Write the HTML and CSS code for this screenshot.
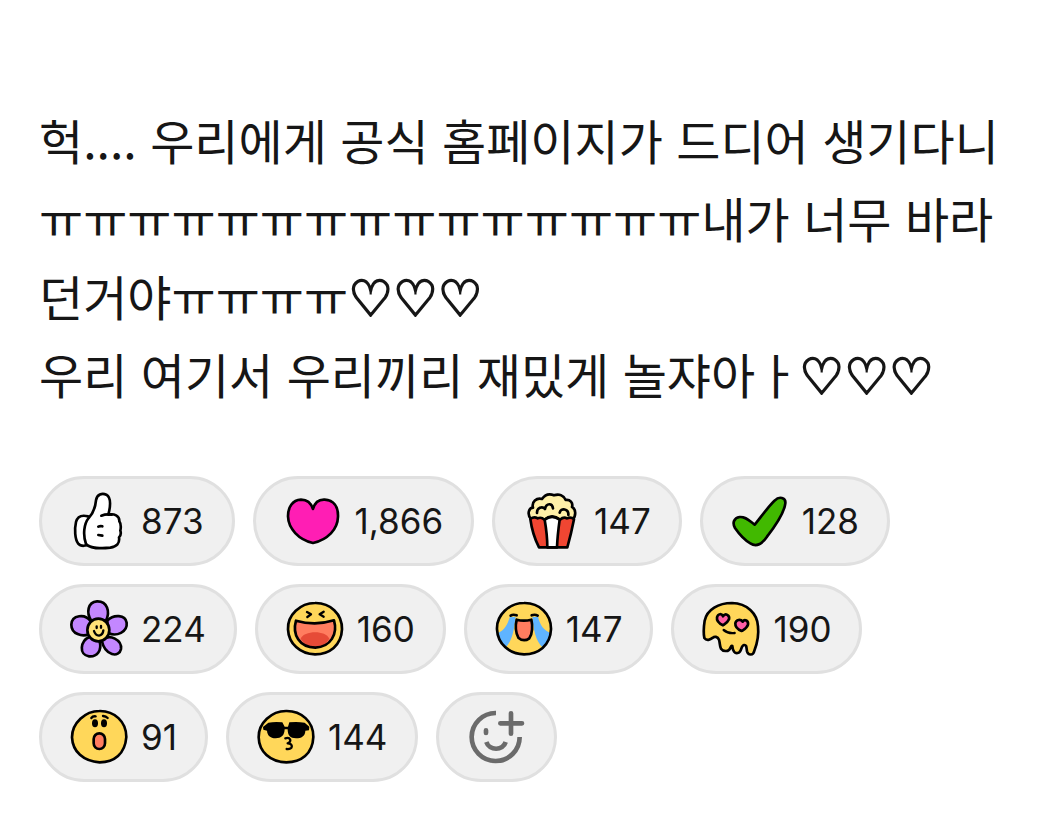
FILE: index.html
```html
<!DOCTYPE html>
<html lang="ko">
<head>
<meta charset="utf-8">
<meta name="viewport" content="width=device-width, initial-scale=1">
<title>게시글</title>
<link rel="stylesheet" href="styles.css">
</head>
<body>
<main class="post">
  <p class="post-text">헉.... 우리에게 공식 홈페이지가 드디어 생기다니ㅠㅠㅠㅠㅠㅠㅠㅠㅠㅠㅠㅠㅠㅠㅠ내가 너무 바라던거야ㅠㅠㅠㅠ<span class="hearts">♡♡♡</span><br>우리 여기서 우리끼리 재밌게 놀쟈아ㅏ<span class="hearts">♡♡♡</span></p>
  <div class="reactions">
    <button class="reaction" type="button">
      <svg class="icon" viewBox="117 63 180 180" aria-hidden="true">
        <path class="ink white" d="M174 139C158 135 143 137 138 156C133 178 135 207 144 220C153 231 170 228 176 222"/>
        <path class="ink white" d="M168 222C158 194 162 161 176 144C192 128 196 111 198 91C201 73 216 68 229 74C243 82 242 107 235 134C252 130 269 137 268 154C275 164 272 177 271 182C274 191 271 198 267 202C270 220 260 230 241 233C215 236 180 235 168 222Z"/>
        <path class="ink" d="M214 137Q229 131 245 134M205 170Q211 167 217 169M205 195L217 197"/>
      </svg>
      <span>873</span>
    </button>
    <button class="reaction" type="button">
      <svg class="icon" viewBox="96 63 180 180" aria-hidden="true">
        <path class="ink pink" d="M186 117C180 99 168 89 150 89C124 90 111 112 111 139C112 176 143 209 186 219C230 209 260 178 261 140C262 110 248 90 221 89C202 88 191 99 186 117Z"/>
      </svg>
      <span>1,866</span>
    </button>
    <button class="reaction" type="button">
      <svg class="icon" viewBox="108 63 180 180" aria-hidden="true">
        <path class="ink cream" d="M136 149C122 133 128 114 141 113C136 96 152 82 168 87C177 74 190 70 204 76C219 71 233 76 239 90C252 88 262 98 258 111C271 117 270 139 260 149Z"/>
        <path class="ink red" d="M133 147Q144 139 155 145Q166 140 175 149Q198 130 222 149Q233 139 243 145Q255 139 264 148C258 179 252 204 244 232H159C146 207 137 177 133 147Z"/>
        <path class="ink white" d="M176 149Q198 132 221 149C217 178 214 205 213 232H184C184 204 181 178 176 149Z"/>
        <path class="ink" d="M153 129C152 113 169 107 177 117C181 98 199 99 201 115M221 128C224 112 249 116 247 135"/>
      </svg>
      <span>147</span>
    </button>
    <button class="reaction" type="button">
      <svg class="icon" viewBox="102 63 180 180" aria-hidden="true">
        <path class="ink green" d="M176 164C195 141 218 108 237 91C249 78 270 82 268 100C265 126 237 169 213 200C198 222 180 231 163 220C147 211 128 190 117 174C108 158 114 144 131 141C149 140 158 151 176 164Z"/>
      </svg>
      <span>128</span>
    </button>
    <button class="reaction" type="button">
      <svg class="icon" viewBox="117 57 180 180" aria-hidden="true">
        <path class="ink purple" d="M184 122C168 99 173 66 201 64C232 63 241 95 228 122Z"/>
        <path class="ink purple" d="M232 122C251 102 286 104 290 128C293 156 260 171 234 159Z"/>
        <path class="ink purple" d="M215 181C240 159 276 181 273 207C268 234 225 229 215 181Z"/>
        <path class="ink purple" d="M209 184C216 211 202 231 177 229C146 225 150 183 179 170Z"/>
        <path class="ink purple" d="M178 162C157 172 124 162 124 134C125 104 166 100 182 124Z"/>
        <ellipse class="ink honey" cx="205" cy="150" rx="33" ry="34"/>
        <path class="ink thin" d="M200 139V144M213 138V143M192 153Q196 166 207 167Q219 164 220 151"/>
      </svg>
      <span>224</span>
    </button>
    <button class="reaction" type="button">
      <svg class="icon" viewBox="99 57 180 180" aria-hidden="true">
        <path class="ink yellow" d="M189 69C234 68 271 101 270 148C268 197 232 223 189 223C144 222 110 191 108 148C106 105 145 69 189 69Z"/>
        <path class="coral" d="M132 122C170 133 211 132 246 121C258 162 236 201 190 203C142 202 120 164 132 122Z"/>
        <path class="crimson" d="M146 176C154 152 220 148 232 176C221 193 210 202 190 203C170 202 155 192 146 176Z"/>
        <path class="ink" d="M132 122C170 133 211 132 246 121C258 162 236 201 190 203C142 202 120 164 132 122Z"/>
        <path class="ink thin" d="M165 96L177 103L166 111M215 95L203 103L215 110"/>
      </svg>
      <span>160</span>
    </button>
    <button class="reaction" type="button">
      <svg class="icon" viewBox="99 57 180 180" aria-hidden="true">
        <path class="yellow" d="M189 69C234 68 271 101 270 148C268 197 232 223 189 223C144 222 110 191 108 148C106 105 145 69 189 69Z"/>
        <path class="sky" d="M146 112L164 110C159 145 156 182 132 204Q113 187 109 160C132 151 139 134 146 112ZM214 111L231 110C237 134 247 151 270 159Q265 187 247 204C222 183 218 146 214 111Z"/>
        <path class="ink" d="M189 69C234 68 271 101 270 148C268 197 232 223 189 223C144 222 110 191 108 148C106 105 145 69 189 69Z"/>
        <path class="ink coral" d="M167 119Q188 125 211 119C215 136 215 161 205 175C194 183 182 182 172 173C164 158 163 136 167 119Z"/>
        <path class="ink" d="M149 107Q156 102 167 106M212 106Q222 102 230 107"/>
      </svg>
      <span>147</span>
    </button>
    <button class="reaction" type="button">
      <svg class="icon" viewBox="108 57 180 180" aria-hidden="true">
        <path class="ink yellow" d="M118 174C115 160 116 142 119 122C126 88 161 69 201 69C246 70 277 100 279 139C282 166 275 194 268 212C265 227 250 227 246 214C244 202 245 194 237 195C227 197 231 215 221 218C209 224 203 211 202 198C195 194 199 215 182 213C161 211 167 195 162 179C158 169 148 169 144 173C136 179 125 184 118 174Z"/>
        <path class="ink rose" d="M174 109C181 98 195 105 192 118C188 128 179 132 174 136C163 131 154 124 156 112C159 100 170 100 174 109ZM233 125C239 116 251 122 249 134C246 145 236 149 230 153C218 148 210 142 211 130C213 118 227 117 233 125Z"/>
        <path class="ink thin" d="M176 150Q190 162 209 159"/>
      </svg>
      <span>190</span>
    </button>
    <button class="reaction" type="button">
      <svg class="icon" viewBox="117 57 180 180" aria-hidden="true">
        <path class="ink yellow" d="M208 69C253 68 289 101 289 147C285 198 253 223 209 223C160 220 128 191 126 148C126 105 166 69 208 69Z"/>
        <rect class="ink coral" x="191" y="136" width="34" height="47" rx="17"/>
        <ellipse cx="195" cy="106" rx="9" ry="12"/>
        <ellipse cx="222" cy="106" rx="9" ry="12"/>
        <path class="ink thin" d="M184 90Q188 84 197 85M219 84Q228 85 233 90"/>
      </svg>
      <span>91</span>
    </button>
    <button class="reaction" type="button">
      <svg class="icon" viewBox="111 57 180 180" aria-hidden="true">
        <path class="ink yellow" d="M201 69C247 68 284 101 283 147C281 198 246 223 202 223C153 222 120 191 119 148C118 105 158 69 201 69Z"/>
        <path d="M132 117L148 104Q169 100 190 103L197 116H207L211 103Q234 100 257 104L271 116L270 127L259 128C259 144 247 151 231 151C213 151 206 142 206 124H197C196 143 187 151 170 151C153 150 145 142 144 128L133 125Z"/>
        <path class="ink thin" d="M199 151C214 146 220 161 206 166C224 166 222 186 203 183"/>
      </svg>
      <span>144</span>
    </button>
    <button class="reaction" type="button" aria-label="반응 추가">
      <svg class="icon" viewBox="114 57 180 180" aria-hidden="true">
        <path class="add" d="M204 75A72 72 0 1 0 275 147"/>
        <path class="add" d="M175 162C184 189 225 189 233 162"/>
        <path class="add round" d="M174 127V135M249 76V137M217 106H282"/>
      </svg>
    </button>
  </div>
</main>
</body>
</html>
```
FILE: styles.css
```css
* {
  box-sizing: border-box;
}

body {
  margin: 0;
  background: #fff;
  color: #161616;
}

.post {
  padding: 100px 39px 58px;
}

.post-text {
  margin: 0 0 64px;
  font-family: "Noto Sans CJK KR", sans-serif;
  font-size: 48px;
  line-height: 78px;
  word-break: break-all;
}

.hearts {
  font-family: "DejaVu Sans", sans-serif;
  font-size: 50px;
  line-height: 1;
  -webkit-text-stroke: 2px #161616;
}

.reactions {
  display: flex;
  flex-wrap: wrap;
  gap: 18px;
  max-width: 900px;
}

.reaction {
  display: flex;
  align-items: center;
  gap: 12px;
  height: 90px;
  padding: 0 28px 0 27px;
  border: 3px solid #e0e0e0;
  border-radius: 45px;
  background: #f0f0f0;
  color: #161616;
  font-family: Inter, sans-serif;
  font-size: 35px;
  line-height: 42px;
  cursor: pointer;
}

.icon {
  width: 60px;
  height: 60px;
  fill: #000;
}

.ink {
  fill: none;
  stroke: #000;
  stroke-width: 8;
  stroke-linecap: round;
  stroke-linejoin: round;
}

.thin {
  stroke-width: 7;
}

.white { fill: #fff; }
.pink { fill: #ff1eb4; }
.cream { fill: #fff0a8; }
.red { fill: #f04632; }
.green { fill: #41b900; }
.purple { fill: #c387ff; }
.honey { fill: #ffe178; }
.yellow { fill: #ffd75a; }
.coral { fill: #ff7d5f; }
.crimson { fill: #e64b37; }
.sky { fill: #5fb4ff; }
.rose { fill: #ff5fa5; }

.add {
  fill: none;
  stroke: #6b6b6b;
  stroke-width: 14;
}

.round {
  stroke-linecap: round;
}
```
